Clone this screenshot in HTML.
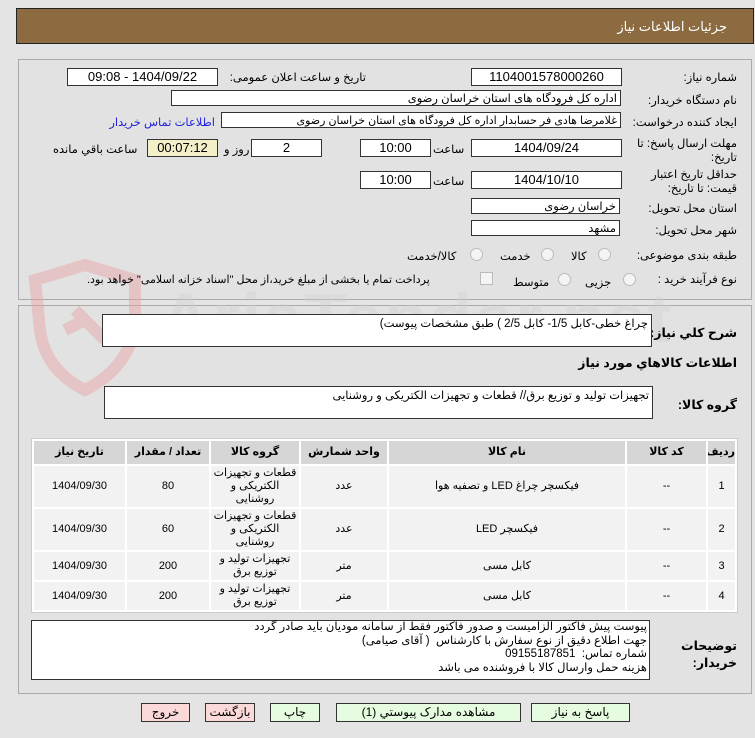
<!DOCTYPE html>
<html><head><meta charset="utf-8"><style>
body{margin:0;width:755px;height:738px;background:#e4e4e4;font-family:"Liberation Sans","DejaVu Sans",sans-serif;font-size:11.5px;color:#000;position:relative;overflow:hidden}
.a{position:absolute}
.hd{left:16px;top:8px;width:736px;height:34px;background:#8b6b3f;border:1px solid #222}
.pn{position:absolute;border:1px solid #aaa;background:#e2e2e2}
.in{position:absolute;background:#fff;border:1px solid #333;height:16px;line-height:16px;text-align:center;direction:rtl;white-space:nowrap;overflow:hidden;font-size:13px}
.ir{text-align:right;padding-right:3px;box-sizing:border-box;font-size:11.5px}
.l{position:absolute;direction:rtl;white-space:nowrap;text-align:right}
.r{position:absolute;width:11px;height:11px;border-radius:50%;border:1px solid #bbb;background:#f4f4f4}
table{position:absolute;left:31px;top:438px;width:707px;border-collapse:separate;border-spacing:2px;background:#fff;border:1px solid #ccc;direction:rtl;table-layout:fixed}
td,th{text-align:center;font-size:11px;padding:0;line-height:13px;overflow:hidden}
th{background:#d6d6d6;height:23px;font-weight:bold}
td{background:#f2f2f2}
.btn{position:absolute;top:703px;height:17px;border:1px solid #333;background:#e6fce0;text-align:center;line-height:17px;direction:rtl;font-size:12px}
.pk{background:#fbd9d9}
</style></head><body>
<div class="a hd"></div>
<div class="l" style="right:28px;top:19px;color:#fff;font-size:13px">جزئیات اطلاعات نیاز</div>
<div class="pn" style="left:18px;top:59px;width:732px;height:239px"></div>
<div class="pn" style="left:18px;top:305px;width:732px;height:387px"></div>
<!-- watermark -->
<svg class="a" style="left:25px;top:250px;opacity:.45" width="130" height="150" viewBox="0 0 130 150"><path d="M10 30 L60 15 L110 30 L110 80 Q100 120 60 140 Q20 120 15 80 Z" fill="none" stroke="#e8a0a0" stroke-width="12"/><path d="M50 60 L80 90 M40 80 L60 70" stroke="#e8a0a0" stroke-width="12"/></svg>
<div class="a" style="left:160px;top:278px;font-size:70px;font-weight:bold;color:#cfcfcf;opacity:.35;letter-spacing:2px">AriaTender.net</div>

<div class="l" style="right:18px;top:70px">شماره نیاز:</div>
<div class="in" style="left:471px;top:68px;width:149px">1104001578000260</div>
<div class="l" style="right:389px;top:70px">تاریخ و ساعت اعلان عمومی:</div>
<div class="in" style="left:67px;top:68px;width:149px">1404/09/22 - 09:08</div>

<div class="l" style="right:18px;top:93px">نام دستگاه خریدار:</div>
<div class="in ir" style="left:171px;top:90px;width:450px">اداره کل فرودگاه های استان خراسان رضوی</div>

<div class="l" style="right:18px;top:115px">ایجاد کننده درخواست:</div>
<div class="in ir" style="left:221px;top:112px;width:400px;font-size:11px">غلامرضا هادی فر حسابدار اداره کل فرودگاه های استان خراسان رضوی</div>
<div class="l" style="right:540px;top:115px;color:#2222dd">اطلاعات تماس خریدار</div>

<div class="l" style="right:18px;top:136px">مهلت ارسال پاسخ: تا</div>
<div class="l" style="right:18px;top:150px">تاریخ:</div>
<div class="in" style="left:471px;top:139px;width:149px">1404/09/24</div>
<div class="l" style="left:433px;top:142px">ساعت</div>
<div class="in" style="left:360px;top:139px;width:69px">10:00</div>
<div class="in" style="left:251px;top:139px;width:69px">2</div>
<div class="l" style="left:224px;top:142px">روز و</div>
<div class="in" style="left:147px;top:139px;width:69px;background:#f3efc8">00:07:12</div>
<div class="l" style="left:53px;top:142px">ساعت باقي مانده</div>

<div class="l" style="right:18px;top:167px">حداقل تاریخ اعتبار</div>
<div class="l" style="right:18px;top:181px">قیمت: تا تاریخ:</div>
<div class="in" style="left:471px;top:171px;width:149px">1404/10/10</div>
<div class="l" style="left:433px;top:174px">ساعت</div>
<div class="in" style="left:360px;top:171px;width:69px">10:00</div>

<div class="l" style="right:18px;top:201px">استان محل تحویل:</div>
<div class="in ir" style="left:471px;top:198px;width:149px">خراسان رضوی</div>
<div class="l" style="right:18px;top:223px">شهر محل تحویل:</div>
<div class="in ir" style="left:471px;top:220px;width:149px">مشهد</div>

<div class="l" style="right:18px;top:248px">طبقه بندی موضوعی:</div>
<div class="r" style="left:598px;top:248px"></div><div class="l" style="left:571px;top:249px">کالا</div>
<div class="r" style="left:541px;top:248px"></div><div class="l" style="left:500px;top:249px">خدمت</div>
<div class="r" style="left:470px;top:248px"></div><div class="l" style="left:407px;top:249px">کالا/خدمت</div>

<div class="l" style="right:18px;top:272px">نوع فرآیند خرید :</div>
<div class="r" style="left:623px;top:273px"></div><div class="l" style="left:585px;top:275px">جزیی</div>
<div class="r" style="left:558px;top:273px"></div><div class="l" style="left:513px;top:275px">متوسط</div>
<div class="a" style="left:480px;top:272px;width:11px;height:11px;border:1px solid #bbb;background:#f4f4f4"></div>
<div class="l" style="left:87px;top:273px;font-size:11px">پرداخت تمام یا بخشی از مبلغ خرید،از محل "اسناد خزانه اسلامی" خواهد بود.</div>

<div class="l" style="right:18px;top:325px;font-weight:bold;font-size:12.5px">شرح کلي نياز:</div>
<div class="in ir" style="left:102px;top:314px;width:550px;height:33px;line-height:18px;text-align:right">چراغ خطی-کابل 1/5- کابل 2/5 ) طبق مشخصات پیوست)</div>
<div class="l" style="right:18px;top:355px;font-weight:bold;font-size:12.5px">اطلاعات کالاهاي مورد نياز</div>
<div class="l" style="right:18px;top:397px;font-weight:bold;font-size:12.5px">گروه کالا:</div>
<div class="in ir" style="left:104px;top:386px;width:549px;height:33px;line-height:18px;text-align:right">تجهیزات تولید و توزیع برق// قطعات و تجهیزات الکتریکی و روشنایی</div>

<table>
<tr><th style="width:27px">ردیف</th><th style="width:79px">کد کالا</th><th style="width:236px">نام کالا</th><th style="width:86px">واحد شمارش</th><th style="width:88px">گروه کالا</th><th style="width:82px">تعداد / مقدار</th><th>تاریخ نیاز</th></tr>
<tr style="height:41px"><td>1</td><td>--</td><td>فیکسچر چراغ LED و تصفیه هوا</td><td>عدد</td><td>قطعات و تجهیزات الکتریکی و روشنایی</td><td>80</td><td>1404/09/30</td></tr>
<tr style="height:41px"><td>2</td><td>--</td><td>فیکسچر LED</td><td>عدد</td><td>قطعات و تجهیزات الکتریکی و روشنایی</td><td>60</td><td>1404/09/30</td></tr>
<tr style="height:28px"><td>3</td><td>--</td><td>کابل مسی</td><td>متر</td><td>تجهیزات تولید و توزیع برق</td><td>200</td><td>1404/09/30</td></tr>
<tr style="height:28px"><td>4</td><td>--</td><td>کابل مسی</td><td>متر</td><td>تجهیزات تولید و توزیع برق</td><td>200</td><td>1404/09/30</td></tr>
</table>

<div class="l" style="right:18px;top:638px;font-weight:bold;font-size:12.5px">توضیحات</div>
<div class="l" style="right:18px;top:655px;font-weight:bold;font-size:12.5px">خریدار:</div>
<div class="a" style="left:31px;top:620px;width:619px;height:60px;background:#fff;border:1px solid #333;direction:rtl;text-align:right;font-size:11.5px;line-height:13.5px;padding-right:2px;box-sizing:border-box">پیوست پیش فاکتور الزامیست و صدور فاکتور فقط از سامانه مودیان باید صادر گردد<br>جهت اطلاع دقیق از نوع سفارش با کارشناس &nbsp;( آقای صیامی)<br>شماره تماس: &nbsp;09155187851<br>هزینه حمل وارسال کالا با فروشنده می باشد</div>

<div class="btn" style="left:531px;width:97px">پاسخ به نیاز</div>
<div class="btn" style="left:336px;width:183px">مشاهده مدارک پیوستي (1)</div>
<div class="btn" style="left:270px;width:48px">چاپ</div>
<div class="btn pk" style="left:205px;width:48px">بازگشت</div>
<div class="btn pk" style="left:141px;width:47px">خروج</div>
</body></html>
